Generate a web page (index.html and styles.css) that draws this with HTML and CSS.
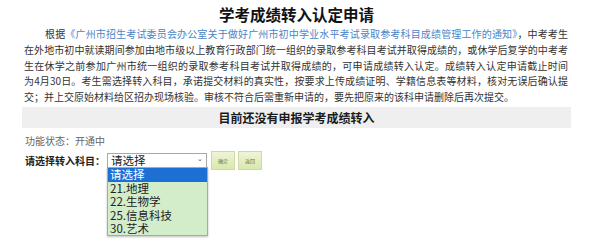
FILE: index.html
```html
<!DOCTYPE html>
<html lang="zh-CN">
<head>
<meta charset="utf-8">
<link rel="stylesheet" href="styles.css">
</head>
<body>
<div class="page">
  <h1 class="title">学考成绩转入认定申请</h1>
  <p class="intro">
    <span class="ln first">根据<a class="link">《广州市招生考试委员会办公室关于做好广州市初中学业水平考试录取参考科目成绩管理工作的通知》</a>，中考考生</span>
    <span class="ln">在外地市初中就读期间参加由地市级以上教育行政部门统一组织的录取参考科目考试并取得成绩的，或休学后复学的中考考</span>
    <span class="ln">生在休学之前参加广州市统一组织的录取参考科目考试并取得成绩的，可申请成绩转入认定。成绩转入认定申请截止时间</span>
    <span class="ln">为4月30日。考生需选择转入科目，承诺提交材料的真实性，按要求上传成绩证明、学籍信息表等材料，核对无误后确认提</span>
    <span class="ln last">交；并上交原始材料给区招办现场核验。审核不符合后需重新申请的，要先把原来的该科申请删除后再次提交。</span>
  </p>
  <div class="bar">目前还没有申报学考成绩转入</div>
  <div class="status">功能状态：开通中</div>
  <div class="form-row">
    <span class="label">请选择转入科目：</span>
    <div class="select-wrap">
      <div class="select"><span>请选择</span><span class="arrow">&#8964;</span></div>
      <ul class="options">
        <li class="selected">请选择</li>
        <li>21.地理</li>
        <li>22.生物学</li>
        <li>25.信息科技</li>
        <li>30.艺术</li>
      </ul>
    </div>
    <span class="btn">确定</span>
    <span class="btn">返回</span>
  </div>
</div>
</body>
</html>
```
FILE: styles.css
```css
html, body {
  margin: 0;
  padding: 0;
  background: #ffffff;
}
body {
  font-family: "Noto Sans CJK SC", "Liberation Sans", sans-serif;
  color: #333333;
  min-height: 242px;
}
.page {
  width: 549px;
  min-height: 238px;
  padding: 4px 0 0 22px;
}
.title {
  margin: 0;
  font-size: 15.5px;
  line-height: 20px;
  font-weight: bold;
  text-align: center;
  color: #111111;
}
.intro {
  margin: 2px 3px 0 2px;
  font-size: 10px;
  line-height: 15.8px;
  color: #333333;
}
.ln {
  display: block;
  white-space: nowrap;
  text-align: justify;
  text-align-last: justify;
  height: 15.8px;
}
.ln.first {
  padding-left: 21px;
}
.ln.last {
  text-align-last: left;
}
.link {
  color: #4a86c8;
}
.bar {
  margin-top: 2px;
  height: 21px;
  line-height: 21px;
  background: #efefef;
  text-align: center;
  font-size: 12px;
  font-weight: bold;
  color: #1a1a1a;
}
.status {
  margin: 6px 0 0 3px;
  font-size: 10px;
  line-height: 14px;
  color: #666666;
}
.form-row {
  margin: 3px 0 0 3px;
  display: flex;
  align-items: center;
  height: 20px;
}
.label {
  font-size: 10px;
  font-weight: bold;
  color: #222222;
  width: 82px;
  white-space: nowrap;
}
.select-wrap {
  position: relative;
  width: 100px;
  height: 15px;
  margin-right: 1px;
}
.select {
  height: 13px;
  border: 1px solid #a9a9a9;
  background: #ffffff;
  display: flex;
  justify-content: space-between;
  align-items: center;
  padding: 0 3px;
  font-size: 11.5px;
  line-height: 13px;
  color: #222;
}
.arrow {
  font-size: 7px;
  line-height: 7px;
  color: #555;
  margin-top: -4px;
}
.options {
  position: absolute;
  z-index: 10;
  display: block;
  left: 0;
  top: 14px;
  width: 99px;
  margin: 0;
  padding: 0;
  list-style: none;
  background: #d3ecc9;
  border: 1px solid #9cb29a;
  box-shadow: 0 1px 2px rgba(0,0,0,0.25);
}
.options li {
  display: block;
  height: 13.4px;
  line-height: 13.4px;
  font-size: 11.5px;
  padding-left: 2px;
  color: #222;
}
.options li.selected {
  background: #1e6fd4;
  color: #ffffff;
}
.btn {
  width: 22px;
  height: 17px;
  margin-left: 3px;
  border: 1px solid #cfd9a8;
  background: linear-gradient(#eef5d6, #d9e8ad);
  font-size: 5px;
  line-height: 17px;
  text-align: center;
  color: #667744;
}
```
